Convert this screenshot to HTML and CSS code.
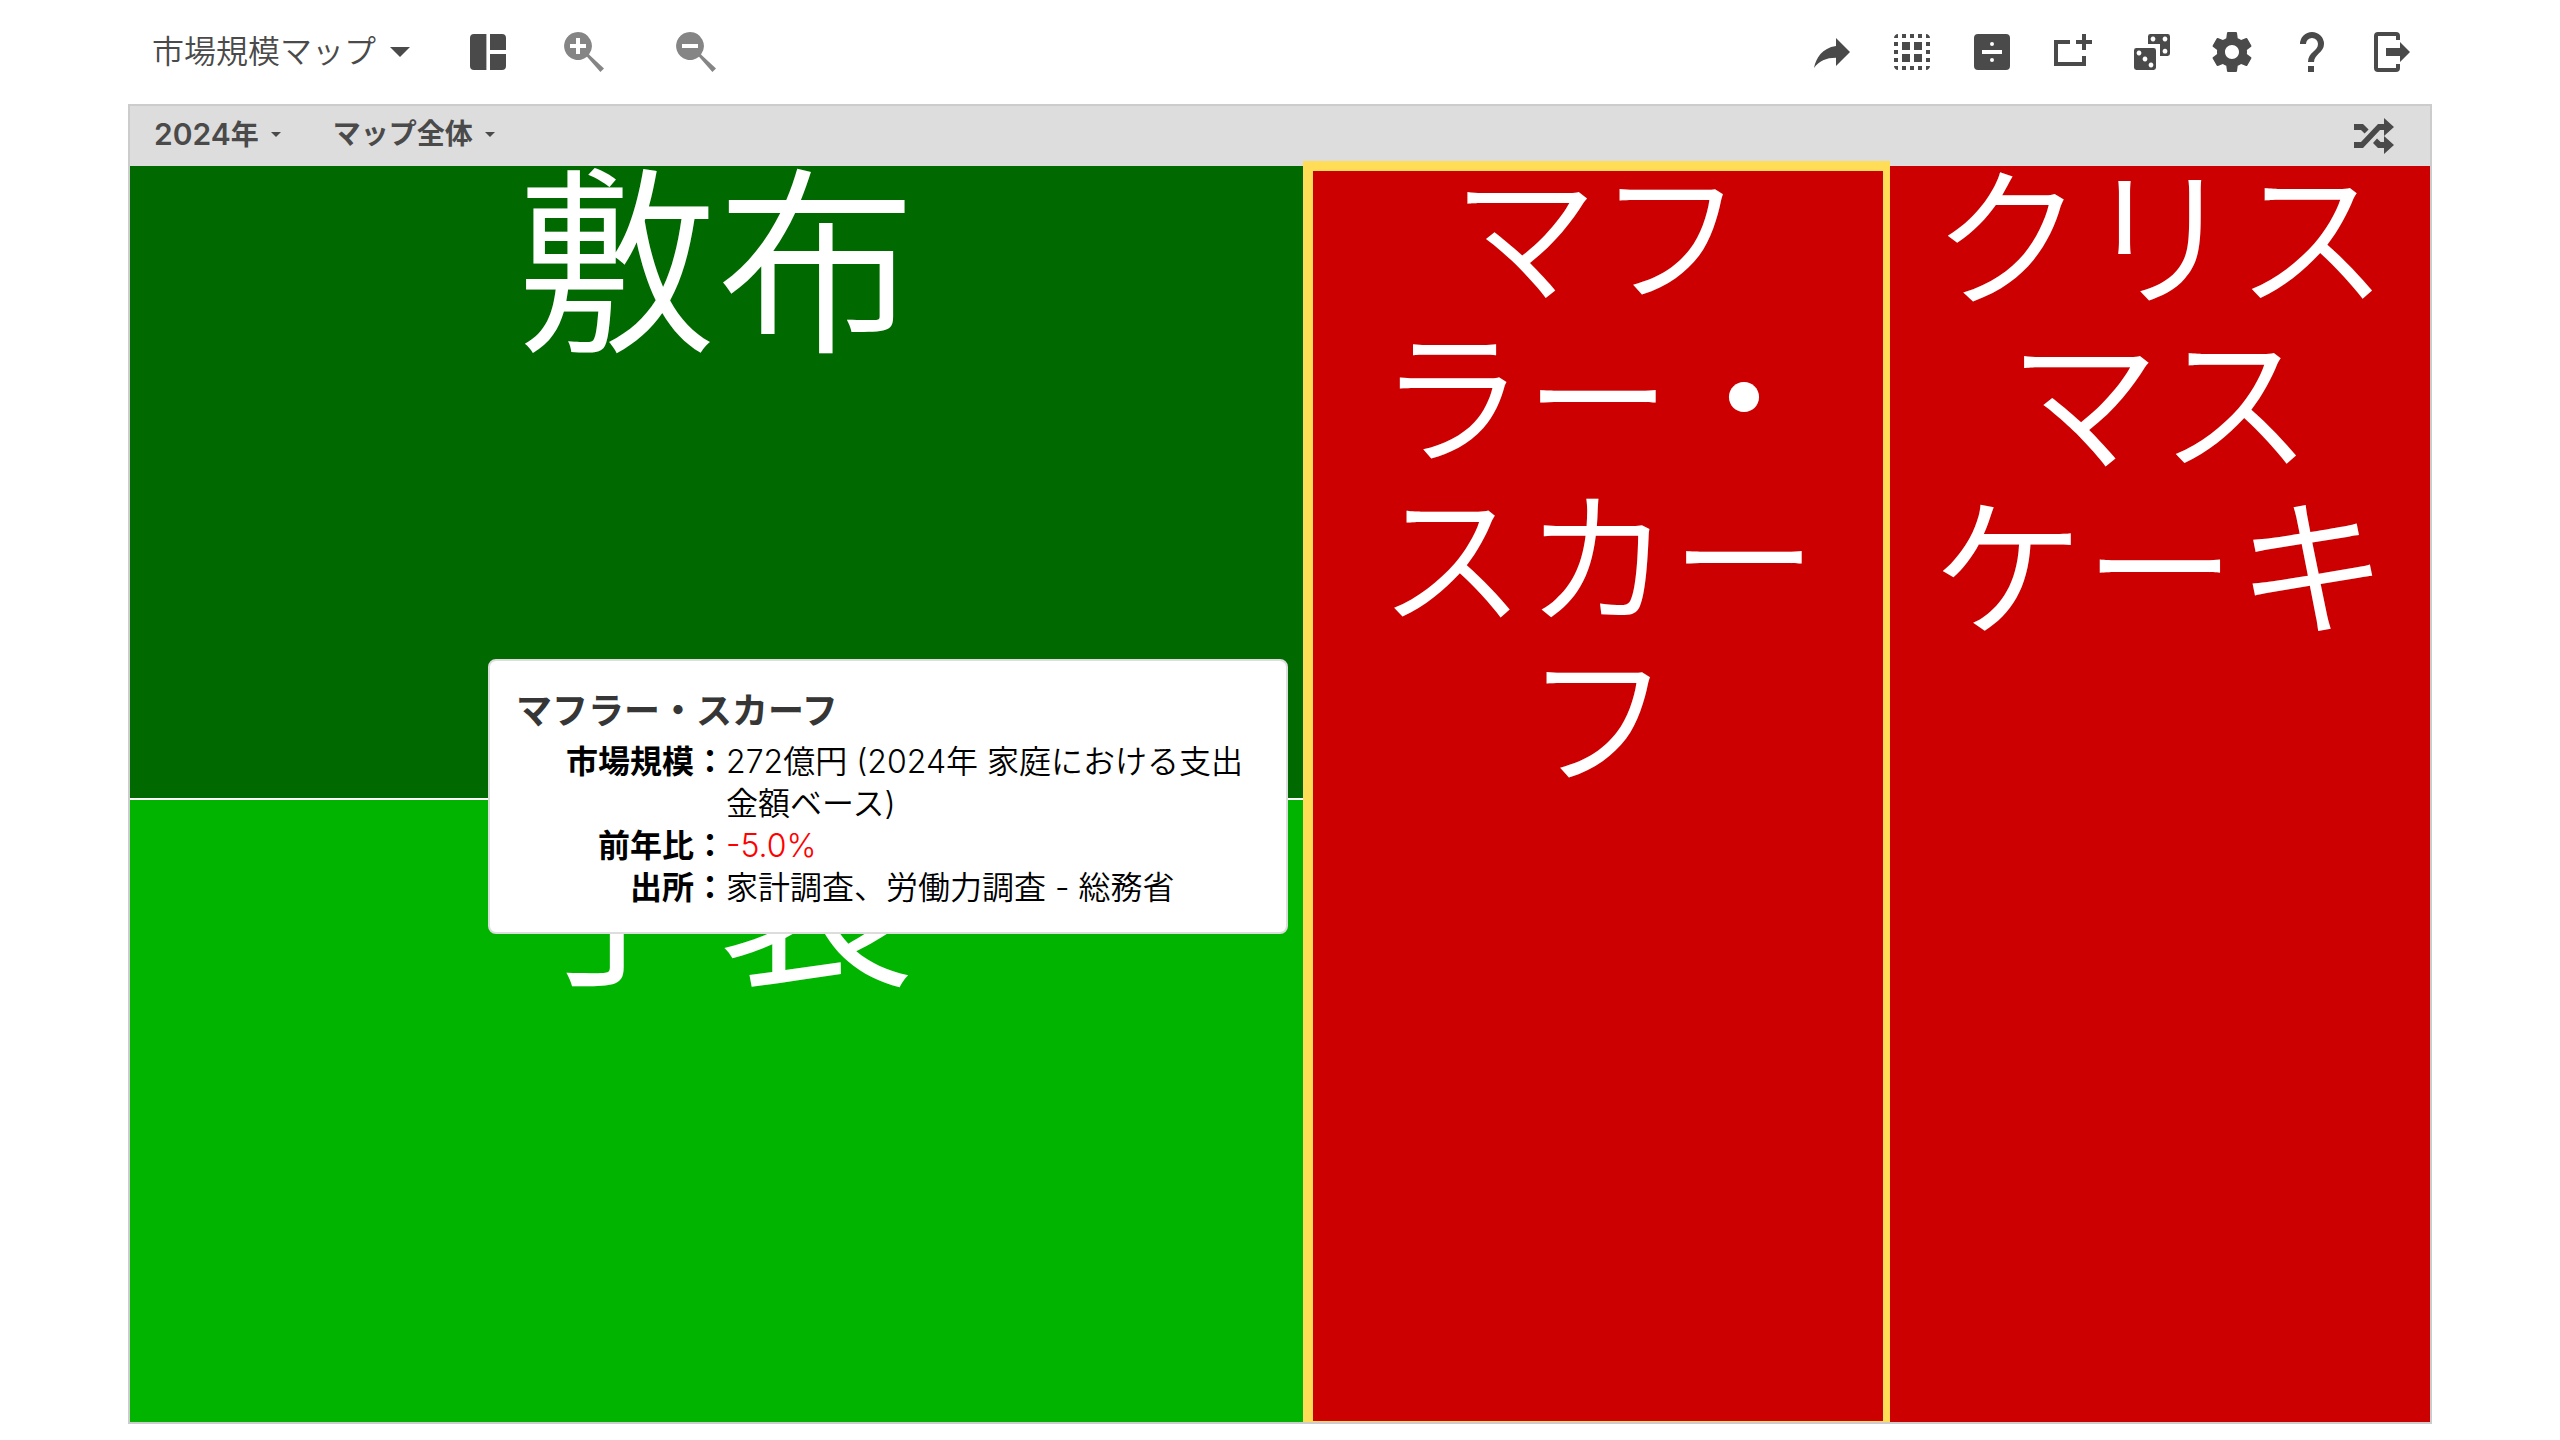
FILE: index.html
```html
<!DOCTYPE html>
<html lang="ja">
<head>
<meta charset="utf-8">
<title>市場規模マップ</title>
<link rel="stylesheet" href="styles.css">
</head>
<body>
<header class="toolbar">
  <button class="map-select" type="button">市場規模マップ<span class="caret"></span></button>
  <div class="tools tools-view">
    <button class="tool" type="button" aria-label="レイアウト"><svg viewBox="0 0 24 24"><path d="M5 3H11.200V21H5Q3 21 3 19V5Q3 3 5 3zM13 3H19Q21 3 21 5V11H13zM13 13H21V19Q21 21 19 21H13z"/></svg></button>
    <div class="tools zoom">
      <button class="tool dim" type="button" aria-label="拡大"><svg viewBox="0 0 24 24"><path fill-rule="evenodd" d="M9 2a7 7 0 0 1 5.500 11.200L22 20.300L20.200 22L13.500 14.400A7 7 0 1 1 9 2zM8 5V8H5V10H8V13H10V10H13V8H10V5z"/></svg></button>
      <button class="tool dim" type="button" aria-label="縮小"><svg viewBox="0 0 24 24"><path fill-rule="evenodd" d="M9 2a7 7 0 0 1 5.500 11.200L22 20.300L20.200 22L13.500 14.400A7 7 0 1 1 9 2zM5 8V10H13V8z"/></svg></button>
    </div>
  </div>
  <div class="tools tools-app">
    <button class="tool" type="button" aria-label="共有"><svg viewBox="0 0 24 24"><path d="M21 12l-7-7v4C7 10 4 15 3 20c2.500-3.500 6-5.100 11-5.100V19z"/></svg></button>
    <button class="tool" type="button" aria-label="選択"><svg viewBox="0 0 24 24"><path d="M3 5h2V3c-1.100 0-2 .9-2 2zm0 8h2v-2H3v2zm4 8h2v-2H7v2zM3 9h2V7H3v2zm10-6h-2v2h2V3zm6 0v2h2c0-1.100-.9-2-2-2zM5 21v-2H3c0 1.100.9 2 2 2zm-2-4h2v-2H3v2zM9 3H7v2h2V3zm2 18h2v-2h-2v2zm8-8h2v-2h-2v2zm0 8c1.100 0 2-.9 2-2h-2v2zm0-12h2V7h-2v2zm0 8h2v-2h-2v2zm-4 4h2v-2h-2v2zm0-16h2V3h-2v2zM7 7h4v4H7zM13 7h4v4h-4zM7 13h4v4H7zM13 13h4v4h-4z"/></svg></button>
    <button class="tool" type="button" aria-label="割り算"><svg viewBox="0 0 24 24"><path fill-rule="evenodd" d="M5 3h14q2 0 2 2v14q0 2-2 2H5q-2 0-2-2V5q0-2 2-2zM7 11v2h10v-2zM12 7a1 1 0 1 0 0 2a1 1 0 1 0 0-2zM12 15a1 1 0 1 0 0 2a1 1 0 1 0 0-2z"/></svg></button>
    <button class="tool" type="button" aria-label="追加"><svg viewBox="0 0 24 24"><path d="M3 6h8v2H5v9h12v-3h2v5H3zM17 3h2v3h3v2h-3v3h-2V8h-3V6h3z"/></svg></button>
    <button class="tool" type="button" aria-label="ランダム"><svg viewBox="0 0 24 24"><path fill-rule="evenodd" d="M4.200 10h8.600q1.200 0 1.200 1.200v8.600q0 1.200-1.200 1.200H4.200Q3 21 3 19.800v-8.600Q3 10 4.200 10zM5.500 11.300a1.200 1.200 0 1 0 .01 0zM8.500 14.300a1.200 1.200 0 1 0 .01 0zM11.500 17.300a1.200 1.200 0 1 0 .01 0zM11.200 3h8.600Q21 3 21 4.200v8.600q0 1.200-1.200 1.200H16V8h-6V4.200Q10 3 11.200 3zM12.500 4.300a1.200 1.200 0 1 0 .01 0zM18.500 4.300a1.200 1.200 0 1 0 .01 0zM18.500 10.400a1.200 1.200 0 1 0 .01 0z"/></svg></button>
    <button class="tool" type="button" aria-label="設定"><svg viewBox="0 0 24 24"><path d="M19.430 12.980c.04-.32.07-.64.07-.98s-.03-.66-.07-.98l2.110-1.650c.19-.15.24-.42.12-.64l-2-3.460c-.12-.22-.39-.3-.61-.22l-2.490 1c-.52-.4-1.080-.73-1.690-.98l-.38-2.650C14.460 2.180 14.250 2 14 2h-4c-.25 0-.46.18-.49.42l-.38 2.650c-.61.25-1.170.59-1.690.98l-2.490-1c-.23-.09-.49 0-.61.22l-2 3.460c-.13.22-.07.49.12.64l2.110 1.650c-.04.32-.07.65-.07.98s.03.66.07.98l-2.110 1.650c-.19.15-.24.42-.12.64l2 3.460c.12.22.39.3.61.22l2.490-1c.52.4 1.080.73 1.690.98l.38 2.650c.03.24.24.42.49.42h4c.25 0 .46-.18.49-.42l.38-2.650c.61-.25 1.170-.59 1.690-.98l2.490 1c.23.09.49 0 .61-.22l2-3.460c.12-.22.07-.49-.12-.64l-2.110-1.650zM12 15.500c-1.930 0-3.500-1.570-3.500-3.500s1.570-3.500 3.500-3.500 3.500 1.570 3.500 3.500-1.570 3.500-3.500 3.500z"/></svg></button>
    <button class="tool" type="button" aria-label="ヘルプ"><svg viewBox="0 0 24 24"><path d="M6 8a6 6 0 0 1 12 0c0 4.300-5 5.200-5 9h-3c0-4.900 5-5.500 5-9a3 3 0 0 0-6 0zM10 19h3v3h-3z"/></svg></button>
    <button class="tool" type="button" aria-label="ログアウト"><svg viewBox="0 0 24 24"><path d="M5 2h9q2 0 2 2v2h-2V4H5v16h9v-2h2v2q0 2-2 2H5q-2 0-2-2V4q0-2 2-2zM9 10h7V7l5 5-5 5v-3H9z"/></svg></button>
  </div>
</header>
<main class="frame">
  <nav class="filters">
    <button class="filter" type="button"><span><span class="digits">2024</span>年</span><span class="caret small"></span></button>
    <button class="filter" type="button">マップ全体<span class="caret small"></span></button>
    <button class="tool shuffle" type="button" aria-label="シャッフル"><svg viewBox="0 0 24 24"><path d="M2 6h4.500l2.800 2.700-2 2L5.500 9H2zM2 15h3.500l8.500-9h3V3l5 4.500-5 4.500V9h-2l-8.500 9H2zM13.500 13.200L15.300 15H17v-3l5 4.500-5 4.500v-3h-3l-2.500-2.500z"/></svg></button>
  </nav>
  <div class="map">
    <div class="column">
      <section class="cell deep-green"><div class="label">敷布</div></section>
      <section class="cell green"><div class="label">手袋</div></section>
    </div>
    <section class="cell red selected"><div class="label">マフ<br>ラー・<br>スカー<br>フ</div></section>
    <section class="cell red last"><div class="label">クリス<br>マス<br>ケーキ</div></section>
    <aside class="tooltip" role="tooltip">
      <h2 class="tip-title">マフラー・スカーフ</h2>
      <dl class="tip-list">
        <dt>市場規模：</dt><dd>272億円 (2024年 家庭における支出金額ベース)</dd>
        <dt>前年比：</dt><dd class="down">-5.0%</dd>
        <dt>出所：</dt><dd>家計調査、労働力調査 - 総務省</dd>
      </dl>
    </aside>
  </div>
</main>
</body>
</html>
```
FILE: styles.css
```css
* { box-sizing: border-box; }

body {
  margin: 0;
  min-height: 100vh;
  padding: 0 5% 16px;
  display: flex;
  flex-direction: column;
  background: #fff;
  color: #4a4a4a;
  font-family: Inter, "Noto Sans CJK JP", sans-serif;
}

button {
  margin: 0;
  padding: 0;
  border: 0;
  background: none;
  color: inherit;
  font: inherit;
  cursor: pointer;
}

.toolbar {
  display: flex;
  align-items: center;
  height: 104px;
  padding: 0 16px 0 24px;
}

.map-select {
  display: flex;
  align-items: center;
  gap: 14px;
  font-size: 32px;
  line-height: 48px;
  font-weight: 350;
}

.caret {
  border: 10px solid transparent;
  border-top-color: #4a4a4a;
  border-bottom: 0;
}

.caret.small {
  border-width: 5px 5px 0;
}

.tools { display: flex; }
.tools-view { gap: 48px; margin-left: 54px; }
.zoom { gap: 64px; }
.tools-app { gap: 32px; margin-left: auto; }

.tool {
  width: 48px;
  height: 48px;
  fill: #4a4a4a;
}

.tool svg { display: block; width: 100%; height: 100%; }
.dim { fill: #858585; }

.frame {
  flex: 1;
  display: flex;
  flex-direction: column;
  border: 2px solid #ccc;
}

.filters {
  display: flex;
  align-items: center;
  gap: 52px;
  height: 60px;
  padding: 0 32px 0 24px;
  background: #ddd;
}

.filter {
  display: flex;
  align-items: center;
  gap: 12px;
  padding-bottom: 4px;
  font-size: 28px;
  line-height: 40px;
  font-weight: 700;
}

.digits { font-size: 30px; font-weight: 600; }

.shuffle { margin-left: auto; }

.map {
  flex: 1;
  position: relative;
  display: grid;
  grid-template-columns: 1173fr 587fr 540fr;
}

.column {
  display: grid;
  grid-template-rows: 632fr 622fr;
  gap: 2px;
  background: #fff;
}

.cell {
  color: #fff;
  text-align: center;
  font-weight: 350;
}

.label { margin-top: -8px; }

.deep-green,
.green { font-size: 200px; line-height: 212px; }
.deep-green { background: #006a00; }
.green { background: #00b400; }
.red { background: #c00; font-size: 146px; line-height: 161px; }

.selected {
  margin-top: -5px;
  border: solid #ffdd57;
  border-width: 10px 7px 1px 10px;
}

.selected .label { margin-top: -13px; }

.last { font-size: 152px; line-height: 165px; }

.tooltip {
  position: absolute;
  left: 358px;
  top: 493px;
  width: 800px;
  padding: 24px 26px 23px;
  border: 2px solid #ddd;
  border-radius: 8px;
  background: #fff;
}

.tip-title {
  margin: 0 0 4px;
  color: #363636;
  font-size: 36px;
  line-height: 52px;
}

.tip-list {
  display: grid;
  grid-template-columns: 210px 1fr;
  margin: 0;
  color: #000;
  font-size: 32px;
  line-height: 42px;
}

.tip-list dt { text-align: right; font-weight: 700; }
.tip-list dd { margin: 0; font-weight: 350; }
.tip-list .down { color: #f00; }
```
